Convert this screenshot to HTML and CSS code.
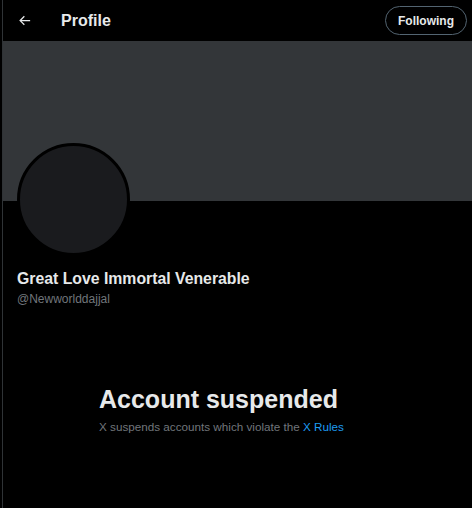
FILE: index.html
```html
<!DOCTYPE html>
<html>
<head>
<meta charset="utf-8">
<link rel="stylesheet" href="styles.css">
</head>
<body>
<div class="column">
  <header class="topbar">
    <div class="left">
      <span class="back">
        <svg width="15" height="15" viewBox="0 0 24 24"><path d="M7.414 13l5.043 5.04-1.414 1.42L3.586 12l7.457-7.46 1.414 1.42L7.414 11H21v2H7.414z" fill="#e7e9ea"/></svg>
      </span>
      <h1 class="title">Profile</h1>
    </div>
    <button class="follow">Following</button>
  </header>
  <div class="banner"></div>
  <div class="profile">
    <div class="avatar"></div>
    <div class="name">Great Love Immortal Venerable</div>
    <div class="handle">@Newworlddajjal</div>
  </div>
  <div class="suspended">
    <div class="heading">Account suspended</div>
    <div class="sub">X suspends accounts which violate the <a class="rules">X Rules</a></div>
  </div>
</div>
</body>
</html>
```
FILE: styles.css
```css
html, body {
  margin: 0;
  padding: 0;
  background: #000;
  height: 100%;
}
body {
  font-family: "Liberation Sans", Arial, sans-serif;
  color: #e7e9ea;
  overflow: hidden;
}
.column {
  margin-left: 2px;
  border-left: 1px solid #2f3336;
  min-height: 508px;
}
.topbar {
  height: 41px;
  display: flex;
  align-items: center;
  justify-content: space-between;
  padding: 0 5px 0 14px;
}
.left {
  display: flex;
  align-items: center;
}
.back {
  width: 15px;
  height: 15px;
  display: flex;
}
.title {
  margin: 0 0 0 29px;
  font-size: 16px;
  font-weight: 700;
  line-height: 20px;
}
.follow {
  height: 29px;
  width: 82px;
  padding: 0;
  border-radius: 15px;
  border: 1px solid #536471;
  background: #000;
  color: #e7e9ea;
  font-family: inherit;
  font-size: 12px;
  font-weight: 700;
}
.banner {
  height: 160px;
  background: #333639;
}
.profile {
  padding: 0 14px;
}
.avatar {
  width: 107px;
  height: 107px;
  border-radius: 50%;
  background: #1a1b1e;
  border: 3px solid #000;
  margin-top: -58px;
}
.name {
  margin-top: 13px;
  font-size: 15.8px;
  font-weight: 700;
  line-height: 20px;
}
.handle {
  font-size: 12px;
  color: #71767b;
  line-height: 20px;
}
.suspended {
  padding: 75px 0 0 96px;
}
.heading {
  font-size: 25px;
  font-weight: 700;
  line-height: 30px;
}
.sub {
  margin-top: 6px;
  font-size: 11.7px;
  color: #71767b;
}
.rules {
  color: #1d9bf0;
}
```
